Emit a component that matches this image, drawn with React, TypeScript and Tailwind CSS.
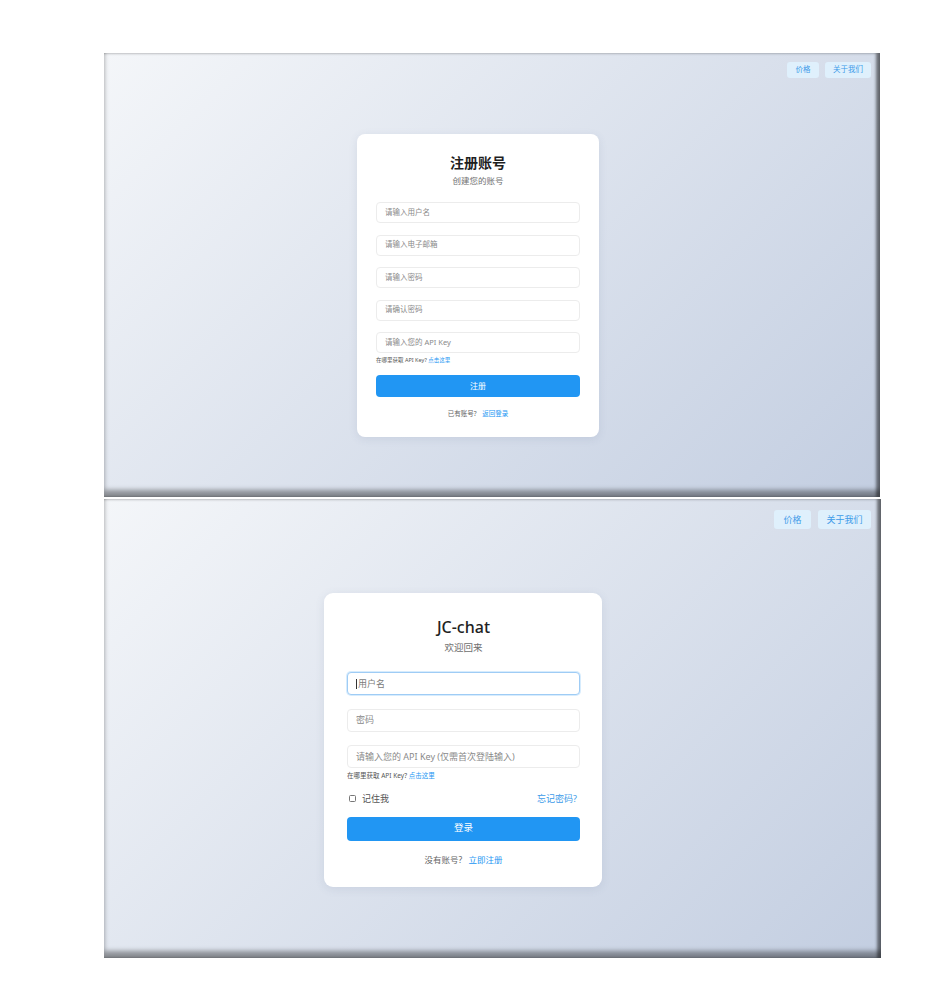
const font = "font-['Noto_Sans','Noto_Sans_CJK_SC',sans-serif]";

function NavButtons({ big }: { big?: boolean }) {
  const base = big
    ? "h-[19px] rounded-[3px] bg-[#dff0fc] text-[#3d9be9] text-[9px] flex items-center justify-center"
    : "h-[16px] rounded-[3px] bg-[#dff0fc] text-[#3d9be9] text-[7.5px] flex items-center justify-center";
  return (
    <div className={big ? "flex justify-end gap-[7px] pt-[11px] pr-[10px]" : "flex justify-end gap-[6px] pt-[9px] pr-[9px]"}>
      <div className={base + (big ? " w-[37px]" : " w-[32px]")}>价格</div>
      <div className={base + (big ? " w-[53px]" : " w-[46px]")}>关于我们</div>
    </div>
  );
}

function Field({ placeholder, h, text, focus }: { placeholder: string; h: string; text: string; focus?: boolean }) {
  return (
    <div
      className={
        "w-full rounded-[4px] bg-white flex items-center " +
        h +
        " " +
        text +
        (focus
          ? " border border-[#9fccf5] shadow-[0_0_0_1px_rgba(33,150,243,0.18)] text-[#7a7a7a] pl-[8px]"
          : " border border-[#ececec] text-[#8a8a8a] pl-[8px]")
      }
    >
      {focus && <span className="w-px h-[10px] bg-[#333] mr-px" />}
      {placeholder}
    </div>
  );
}

const panel =
  "relative bg-[linear-gradient(135deg,#f4f6f9_0%,#c3cee1_100%)] shadow-[inset_-4px_0_3px_rgba(0,0,0,0.45),inset_0_-7px_5px_rgba(0,0,0,0.38)]";

function RegisterPanel() {
  return (
    <div className={panel + " w-[776px] h-[444px]"}>
      <div className="absolute top-0 right-0">
        <NavButtons />
      </div>
      <div className="pl-[253px] pt-[81px]">
        <div className="w-[242px] h-[303px] bg-white rounded-[8px] shadow-[0_2px_8px_rgba(80,100,140,0.12)] px-[19px] pt-[20px] flex flex-col">
          <div className="text-center text-[14px] font-bold text-[#1f1f1f] leading-[18px]">注册账号</div>
          <div className="text-center text-[8.5px] text-[#6f6f6f] mt-[3px] leading-[12px]">创建您的账号</div>
          <div className="mt-[15px] flex flex-col gap-[11.5px]">
            <Field placeholder="请输入用户名" h="h-[21px]" text="text-[7.5px]" />
            <Field placeholder="请输入电子邮箱" h="h-[21px]" text="text-[7.5px]" />
            <Field placeholder="请输入密码" h="h-[21px]" text="text-[7.5px]" />
            <Field placeholder="请确认密码" h="h-[21px]" text="text-[7.5px]" />
            <Field placeholder="请输入您的 API Key" h="h-[21px]" text="text-[7.5px]" />
          </div>
          <div className="text-[5.5px] text-[#555] mt-[3px] leading-[8px]">
            在哪里获取 API Key? <span className="text-[#2196f3]">点击这里</span>
          </div>
          <div className="mt-[11px] h-[22px] rounded-[4px] bg-[#2196f3] text-white text-[8px] flex items-center justify-center">注册</div>
          <div className="mt-[12px] text-center text-[6.5px] text-[#666] leading-[10px]">
            已有账号? <span className="ml-[4px] text-[#2196f3]">返回登录</span>
          </div>
        </div>
      </div>
    </div>
  );
}

function LoginPanel() {
  return (
    <div className={panel + " w-[777px] h-[459px]"}>
      <div className="absolute top-0 right-0">
        <NavButtons big />
      </div>
      <div className="pl-[220px] pt-[94px]">
        <div className="w-[278px] h-[294px] bg-white rounded-[9px] shadow-[0_2px_10px_rgba(80,100,140,0.12)] pl-[23px] pr-[22px] pt-[23px] flex flex-col">
          <div className="text-center text-[16px] font-medium text-[#222] leading-[22px]">JC-chat</div>
          <div className="text-center text-[9.5px] text-[#6f6f6f] mt-[3px] leading-[13px]">欢迎回来</div>
          <div className="mt-[18px] flex flex-col gap-[13.5px]">
            <Field placeholder="用户名" h="h-[23px]" text="text-[9px]" focus />
            <Field placeholder="密码" h="h-[23px]" text="text-[9px]" />
            <Field placeholder="请输入您的 API Key (仅需首次登陆输入)" h="h-[23px]" text="text-[9px]" />
          </div>
          <div className="text-[6.5px] text-[#555] mt-[3px] leading-[9px]">
            在哪里获取 API Key? <span className="text-[#2196f3]">点击这里</span>
          </div>
          <div className="mt-[12px] flex items-center justify-between pl-[2px] pr-[3px]">
            <div className="flex items-center gap-[6px] text-[9px] text-[#555]">
              <span className="w-[7px] h-[7px] border border-[#777] rounded-[1.5px] bg-white" />
              记住我
            </div>
            <span className="text-[9px] text-[#3d9be9]">忘记密码?</span>
          </div>
          <div className="mt-[11px] h-[24px] rounded-[4px] bg-[#2196f3] text-white text-[9.5px] flex items-center justify-center">登录</div>
          <div className="mt-[13px] text-center text-[8.5px] text-[#666] leading-[12px]">
            没有账号? <span className="ml-[4px] text-[#2196f3]">立即注册</span>
          </div>
        </div>
      </div>
    </div>
  );
}

export default function App() {
  return (
    <div className={"w-[932px] h-[998px] bg-white pt-[53px] pl-[104px] flex flex-col gap-[2px] " + font}>
      <RegisterPanel />
      <LoginPanel />
    </div>
  );
}
